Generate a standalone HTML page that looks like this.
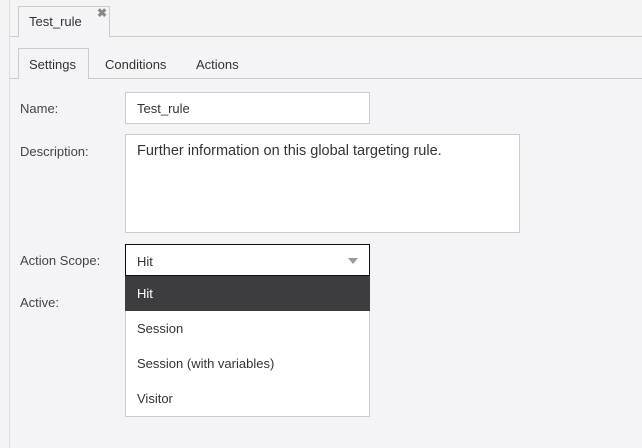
<!DOCTYPE html>
<html><head><style>
body{margin:0;width:642px;height:448px;background:#f4f4f6;font-family:"Liberation Sans",sans-serif;font-size:13px;color:#333;position:relative;overflow:hidden}
.a{position:absolute}
.lbl{position:absolute;left:20px;color:#444}
.box{position:absolute;background:#fff;border:1px solid #ccc;box-sizing:border-box}
.txt{position:absolute;left:11px}
</style></head><body>
<div class="a" style="left:0;top:0;width:642px;height:36px;background:#f4f4f4"></div>
<div class="a" style="left:9px;top:36px;width:633px;height:1px;background:#ccc"></div>
<div class="a" style="left:9px;top:0;width:1px;height:448px;background:#ddd"></div>
<div class="a" style="left:18px;top:6px;width:92px;height:31px;background:#f4f4f6;border:1px solid #ccc;border-bottom:none;box-sizing:border-box"></div>
<div class="a" style="left:29px;top:14px;color:#333">Test_rule</div>
<div class="a" style="left:97px;top:6px;color:#888;font-size:12px;font-weight:bold">✖</div>
<div class="a" style="left:9px;top:78px;width:633px;height:1px;background:#ccc"></div>
<div class="a" style="left:18px;top:48px;width:71px;height:31px;background:#f4f4f6;border:1px solid #ccc;border-bottom:none;box-sizing:border-box"></div>
<div class="a" style="left:29px;top:57px">Settings</div>
<div class="a" style="left:105px;top:57px">Conditions</div>
<div class="a" style="left:196px;top:57px">Actions</div>
<div class="lbl" style="top:101px">Name:</div>
<div class="box" style="left:125px;top:92px;width:245px;height:32px"><span class="txt" style="top:8px">Test_rule</span></div>
<div class="lbl" style="top:144px">Description:</div>
<div class="box" style="left:125px;top:134px;width:395px;height:99px"><span class="txt" style="top:8px;font-size:14.5px">Further information on this global targeting rule.</span></div>
<div class="lbl" style="top:253px">Action Scope:</div>
<div class="lbl" style="top:295px">Active:</div>
<div class="box" style="left:125px;top:244px;width:245px;height:32px;border-color:#111"><span class="txt" style="top:9px">Hit</span>
<div class="a" style="left:222px;top:13px;width:0;height:0;border-left:5px solid transparent;border-right:5px solid transparent;border-top:6px solid #999"></div></div>
<div class="box" style="left:125px;top:276px;width:245px;height:141px;border-top:none">
<div class="a" style="left:-1px;top:0;width:245px;height:35px;background:#3d3d3f"></div>
<span class="txt" style="top:10px;color:#fff">Hit</span>
<span class="txt" style="top:45px">Session</span>
<span class="txt" style="top:80px">Session (with variables)</span>
<span class="txt" style="top:115px">Visitor</span>
</div>
</body></html>
